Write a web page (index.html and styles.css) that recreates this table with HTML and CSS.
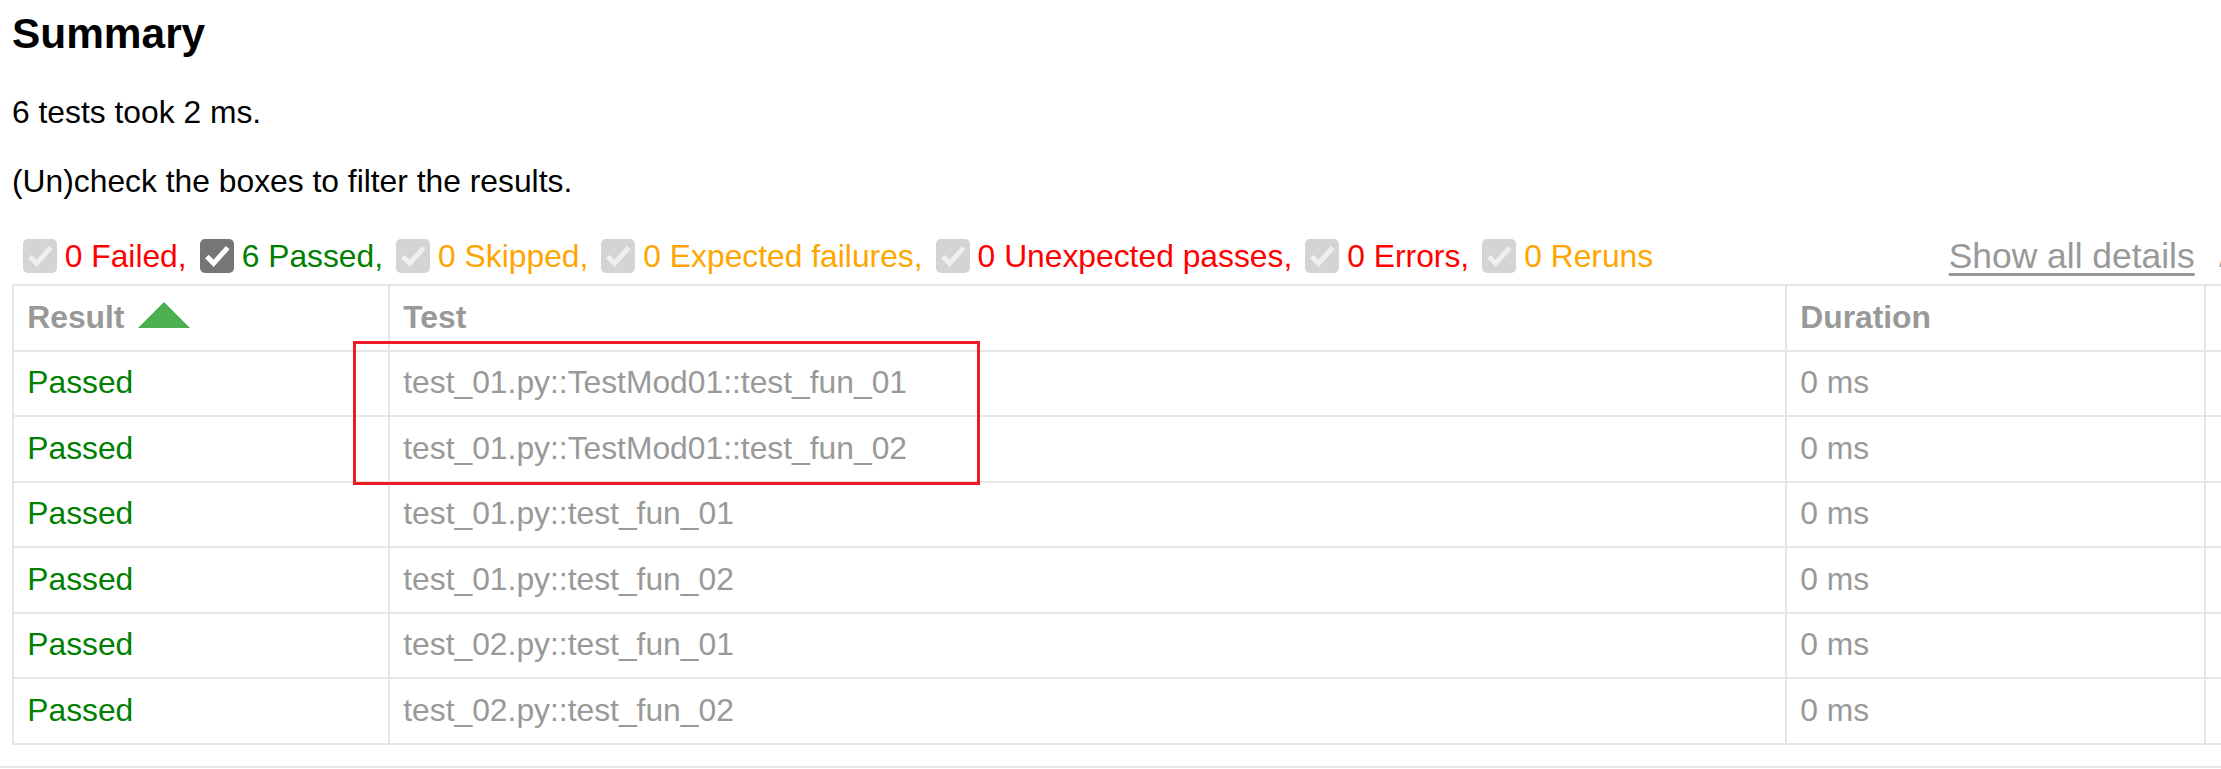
FILE: index.html
```html
<!DOCTYPE html>
<html lang="en">
<head>
<meta charset="utf-8">
<title>Test Report - Summary</title>
<link rel="stylesheet" href="styles.css">
</head>
<body>
<main class="report">
  <h2 class="title">Summary</h2>
  <p class="run-count">6 tests took 2 ms.</p>
  <p class="filter-note">(Un)check the boxes to filter the results.</p>
  <div class="controls">
    <div class="filters">
      <span class="check"><svg viewBox="0 0 13 13"><path d="M2.6 6.7 L5.2 9.3 L10.6 3.3"/></svg></span><span class="label failed">0 Failed,</span>
      <span class="check on"><svg viewBox="0 0 13 13"><path d="M2.6 6.7 L5.2 9.3 L10.6 3.3"/></svg></span><span class="label passed">6 Passed,</span>
      <span class="check"><svg viewBox="0 0 13 13"><path d="M2.6 6.7 L5.2 9.3 L10.6 3.3"/></svg></span><span class="label skipped">0 Skipped,</span>
      <span class="check"><svg viewBox="0 0 13 13"><path d="M2.6 6.7 L5.2 9.3 L10.6 3.3"/></svg></span><span class="label xfailed">0 Expected failures,</span>
      <span class="check"><svg viewBox="0 0 13 13"><path d="M2.6 6.7 L5.2 9.3 L10.6 3.3"/></svg></span><span class="label xpassed">0 Unexpected passes,</span>
      <span class="check"><svg viewBox="0 0 13 13"><path d="M2.6 6.7 L5.2 9.3 L10.6 3.3"/></svg></span><span class="label error">0 Errors,</span>
      <span class="check"><svg viewBox="0 0 13 13"><path d="M2.6 6.7 L5.2 9.3 L10.6 3.3"/></svg></span><span class="label rerun">0 Reruns</span>
    </div>
    <div class="collapse">
      <button class="toggle" type="button">Show all details</button><span class="sep">&nbsp;/&nbsp;</span><button class="toggle" type="button">Hide all details</button>
    </div>
  </div>
  <table class="results">
    <colgroup>
      <col class="c-result">
      <col class="c-test">
      <col class="c-duration">
      <col class="c-links">
    </colgroup>
    <thead>
      <tr>
        <th>Result<span class="sort-asc"></span></th>
        <th>Test</th>
        <th>Duration</th>
        <th></th>
      </tr>
    </thead>
    <tbody>
      <tr><td class="passed">Passed</td><td>test_01.py::TestMod01::test_fun_01</td><td>0 ms</td><td></td></tr>
      <tr><td class="passed">Passed</td><td>test_01.py::TestMod01::test_fun_02</td><td>0 ms</td><td></td></tr>
      <tr><td class="passed">Passed</td><td>test_01.py::test_fun_01</td><td>0 ms</td><td></td></tr>
      <tr><td class="passed">Passed</td><td>test_01.py::test_fun_02</td><td>0 ms</td><td></td></tr>
      <tr><td class="passed">Passed</td><td>test_02.py::test_fun_01</td><td>0 ms</td><td></td></tr>
      <tr><td class="passed">Passed</td><td>test_02.py::test_fun_02</td><td>0 ms</td><td></td></tr>
    </tbody>
  </table>
  <div class="highlight"></div>
</main>
<div class="page-end"></div>
</body>
</html>
```

FILE: styles.css
```css
* {
  box-sizing: border-box;
}

body {
  margin: 0;
  overflow: hidden;
  background: #fff;
  color: #999;
  font-family: "Liberation Sans", Arial, Helvetica, sans-serif;
  font-size: 31.8px;
}

.report {
  position: relative;
  width: 2511px;
  padding: 10px 12px 0;
}

.title {
  margin: 0 0 35.5px;
  color: #000;
  font-size: 42.4px;
  line-height: 48px;
  font-weight: bold;
}

.run-count {
  margin: 0 0 33px;
  color: #000;
  line-height: 36px;
}

.filter-note {
  margin: 0;
  color: #000;
  line-height: 36px;
}

.controls {
  display: flex;
  justify-content: space-between;
  align-items: center;
  height: 42px;
  margin-top: 36.5px;
}

.filters {
  display: flex;
  align-items: center;
  white-space: nowrap;
}

.check {
  display: block;
  flex: none;
  width: 34px;
  height: 34px;
  margin: 0 8px 0 13px;
  border-radius: 5px;
  background: #d4d4d4;
}

.check:first-child {
  margin-left: 10.7px;
}

.check svg {
  display: block;
  width: 34px;
  height: 34px;
  fill: none;
  stroke: #efefef;
  stroke-width: 1.9;
  stroke-linecap: butt;
  stroke-linejoin: miter;
}

.check.on {
  background: #767676;
}

.check.on svg {
  stroke: #fff;
}

.label {
  line-height: 36px;
}

.failed,
.xpassed,
.error {
  color: #ff0000;
}

.passed {
  color: #008000;
}

.skipped,
.xfailed,
.rerun {
  color: #ffa500;
}

.collapse {
  display: flex;
  align-items: center;
  white-space: nowrap;
}

.toggle {
  margin: 0;
  padding: 2.65px 15.9px;
  border: 0;
  background: none;
  color: #999;
  font-family: "Liberation Sans", Arial, Helvetica, sans-serif;
  font-size: 35.4px;
  line-height: 40px;
  text-decoration: underline;
  text-decoration-thickness: 2.6px;
  text-underline-offset: 5px;
}

.sep {
  color: #999;
  line-height: 36px;
}

.results {
  width: 100%;
  margin-top: 7px;
  border: 2px solid #e6e6e6;
  border-collapse: collapse;
  table-layout: fixed;
  color: #999;
}

.c-result {
  width: 376px;
}

.c-test {
  width: 1397px;
}

.c-duration {
  width: 419px;
}

.results th,
.results td {
  padding: 12.5px 13.25px 14.5px;
  border: 2px solid #e6e6e6;
  text-align: left;
  line-height: 36.5px;
  white-space: nowrap;
}

.results th {
  font-weight: bold;
}

.results td.passed {
  color: #008000;
}

.sort-asc {
  display: inline-block;
  width: 0;
  height: 0;
  margin-left: 14px;
  border-left: 26px solid transparent;
  border-right: 26px solid transparent;
  border-bottom: 26px solid #4caf50;
}

.highlight {
  position: absolute;
  left: 353px;
  top: 341px;
  width: 627px;
  height: 144px;
  border: 3px solid #ed1c24;
  pointer-events: none;
}

.page-end {
  margin-top: 21.5px;
  border-top: 2px solid #e6e6e6;
}
```
